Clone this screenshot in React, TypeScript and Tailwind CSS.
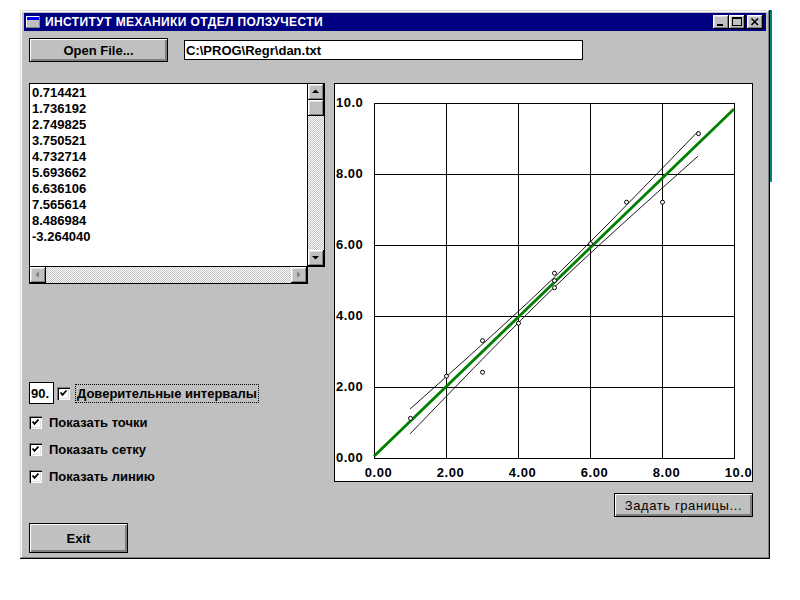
import React from "react";

const bevel =
  "shadow-[inset_-1px_-1px_0_#000,inset_1px_1px_0_#fff,inset_-2px_-2px_0_#808080,inset_2px_2px_0_#dfdfdf]";
const btnBevel =
  "shadow-[inset_1px_1px_0_#fff,inset_-1px_-1px_0_#808080,inset_-2px_-2px_0_#808080]";
const dither =
  "bg-[image:repeating-conic-gradient(#c0c0c0_0_25%,#ffffff_0_50%)] bg-[length:2px_2px]";

function Arrow({ dir, disabled }: { dir: "up" | "down" | "left" | "right"; disabled?: boolean }) {
  const c = disabled ? "#808080" : "#000";
  let pts = "";
  if (dir === "up") pts = "4,9 11,9 7.5,5.5";
  if (dir === "down") pts = "4,6 11,6 7.5,9.5";
  if (dir === "left") pts = "9,4 9,11 5.5,7.5";
  if (dir === "right") pts = "6,4 6,11 9.5,7.5";
  return (
    <div className={`w-[16px] h-[16px] shrink-0 bg-[#c0c0c0] ${bevel}`}>
      <svg width="16" height="16" viewBox="0 0 16 16">
        <polygon points={pts} fill={c} />
      </svg>
    </div>
  );
}

function Check() {
  return (
    <div className="w-[13px] h-[13px] shrink-0 bg-white shadow-[inset_1px_1px_0_#808080,inset_2px_2px_0_#000,inset_-1px_-1px_0_#fff,inset_-2px_-2px_0_#dfdfdf]">
      <svg width="13" height="13" viewBox="0 0 13 13">
        <polyline points="3.5,5.5 5.5,7.8 9.5,3.5" fill="none" stroke="#000" strokeWidth="1.8" />
      </svg>
    </div>
  );
}

function Chart() {
  const X = (x: number) => 39 + 36 * x;
  const Y = (y: number) => 374 - 35.5 * y;
  const ticks = [0, 2, 4, 6, 8, 10];
  const labels = ["0.00", "2.00", "4.00", "6.00", "8.00", "10.0"];
  const upper: string[] = [];
  const lower: string[] = [];
  for (let x = 1; x <= 9.001; x += 0.25) {
    const yc = 0.05 + 0.978 * x;
    const w = Math.sqrt(0.0196 + Math.pow(0.08 * (x - 5), 2));
    upper.push(`${X(x).toFixed(1)},${Y(yc + w).toFixed(1)}`);
    lower.push(`${X(x).toFixed(1)},${Y(yc - w).toFixed(1)}`);
  }
  const pts: [number, number][] = [
    [1, 1.13],
    [2, 2.32],
    [3, 3.32],
    [3, 2.43],
    [4, 3.81],
    [5, 5.22],
    [5, 5.01],
    [5, 4.81],
    [6, 6.05],
    [7, 7.22],
    [8, 7.22],
    [9, 9.15],
  ];
  return (
    <svg width="417" height="397" viewBox="0 0 417 397" className="block">
      <g shapeRendering="crispEdges" stroke="#000" strokeWidth="1">
        {ticks.map((t) => (
          <line key={"v" + t} x1={X(t) + 0.5} y1={Y(10)} x2={X(t) + 0.5} y2={Y(0) + 1} />
        ))}
        {ticks.map((t) => (
          <line key={"h" + t} x1={X(0)} y1={Y(t) + 0.5} x2={X(10) + 1} y2={Y(t) + 0.5} />
        ))}
      </g>
      <g fill="#000" fontFamily="'Liberation Sans', Arial, sans-serif" fontWeight="bold" fontSize="13" letterSpacing="0.5">
        {ticks.map((t, i) => (
          <text key={"yl" + t} x={1} y={Y(t) + 4}>
            {labels[i]}
          </text>
        ))}
        {ticks.map((t, i) => (
          <text key={"xl" + t} x={X(t) + 4.5} y={393} textAnchor="middle">
            {labels[i]}
          </text>
        ))}
      </g>
      <polyline points={upper.join(" ")} fill="none" stroke="#000" strokeWidth="0.9" />
      <polyline points={lower.join(" ")} fill="none" stroke="#000" strokeWidth="0.9" />
      <line x1={X(0)} y1={Y(0.05)} x2={X(10)} y2={Y(9.83)} stroke="#008000" strokeWidth="2.8" />
      {pts.map(([x, y], i) => (
        <circle key={i} cx={X(x) + 0.5} cy={Y(y) + 0.5} r="2" fill="#fff" stroke="#000" strokeWidth="1" />
      ))}
    </svg>
  );
}

export default function App() {
  const values = [
    "0.714421",
    "1.736192",
    "2.749825",
    "3.750521",
    "4.732714",
    "5.693662",
    "6.636106",
    "7.565614",
    "8.486984",
    "-3.264040",
  ];
  return (
    <div className="relative min-h-[600px] bg-white font-['Liberation_Sans',Arial,sans-serif] text-black">
      <div className="absolute left-[770px] top-[10px] w-[2px] h-[172px] bg-[#008080]" />
      <div className="pl-[20px] pt-[10px]">
        <div
          className={`w-[750px] h-[549px] bg-[#c0c0c0] pt-[3px] px-[4px] flex flex-col shadow-[inset_-1px_-1px_0_#000,inset_1px_1px_0_#dfdfdf,inset_-2px_-2px_0_#808080,inset_2px_2px_0_#fff]`}
        >
          {/* Title bar */}
          <div className="h-[18px] bg-[#000080] flex items-center pl-[2px] pr-[3px]">
            <svg width="14" height="12" viewBox="0 0 14 12" className="shrink-0">
              <rect x="0.5" y="0.5" width="13" height="11" fill="#c0c0c0" stroke="#fff" />
              <rect x="1" y="1" width="12" height="3" fill="#0000ff" />
              <rect x="1" y="4" width="12" height="7" fill="#c0c0c0" />
              <line x1="13.5" y1="0" x2="13.5" y2="12" stroke="#808080" />
              <line x1="0" y1="11.5" x2="14" y2="11.5" stroke="#808080" />
            </svg>
            <span className="ml-[5px] text-white font-bold text-[12px] leading-none tracking-[0.4px] whitespace-nowrap">
              ИНСТИТУТ МЕХАНИКИ ОТДЕЛ ПОЛЗУЧЕСТИ
            </span>
            <div className="ml-auto flex items-center">
              <div className={`w-[16px] h-[14px] bg-[#c0c0c0] ${bevel}`}>
                <svg width="16" height="14" viewBox="0 0 16 14">
                  <rect x="4" y="9" width="6" height="2" fill="#000" />
                </svg>
              </div>
              <div className={`w-[16px] h-[14px] bg-[#c0c0c0] ${bevel}`}>
                <svg width="16" height="14" viewBox="0 0 16 14">
                  <rect x="3.5" y="2.5" width="9" height="8" fill="none" stroke="#000" />
                  <rect x="3" y="2" width="10" height="2" fill="#000" />
                </svg>
              </div>
              <div className={`ml-[2px] w-[16px] h-[14px] bg-[#c0c0c0] ${bevel}`}>
                <svg width="16" height="14" viewBox="0 0 16 14">
                  <path d="M4.5 3.5 L11 10 M11 3.5 L4.5 10" stroke="#000" strokeWidth="1.6" />
                </svg>
              </div>
            </div>
          </div>

          {/* Body */}
          <div className="pl-[5px] pt-[7px] flex flex-col">
            <div className="flex items-center">
              <button
                className={`w-[139px] h-[24px] border border-black bg-[#c0c0c0] ${btnBevel} font-bold text-[13px] leading-none`}
              >
                Open File...
              </button>
              <div className="ml-[16px] w-[399px] h-[20px] bg-white border border-black flex items-center pl-[1px] font-bold text-[13px] leading-none whitespace-nowrap">
                C:\PROG\Regr\dan.txt
              </div>
            </div>

            <div className="mt-[21px] flex items-start">
              {/* Left column */}
              <div className="w-[296px] flex flex-col">
                <div className="h-[184px] border border-black flex">
                  <div className="flex-1 bg-white pl-[2px] pt-[1px] font-bold text-[13px] leading-[16px]">
                    {values.map((v) => (
                      <div key={v}>{v}</div>
                    ))}
                  </div>
                  <div className="w-[17px] border-l border-black flex flex-col">
                    <Arrow dir="up" />
                    <div className={`w-[16px] h-[16px] bg-[#c0c0c0] ${bevel}`} />
                    <div className={`flex-1 ${dither}`} />
                    <Arrow dir="down" />
                  </div>
                </div>
                <div className="w-[279px] h-[17px] border-x border-b border-black flex">
                  <Arrow dir="left" disabled />
                  <div className={`flex-1 ${dither}`} />
                  <Arrow dir="right" disabled />
                </div>

                <div className="mt-[98px] flex items-center h-[22px]">
                  <div className="w-[25px] h-[22px] bg-white border border-black flex items-center pl-[1px] font-bold text-[13px] leading-none">
                    90.
                  </div>
                  <div className="ml-[3px]">
                    <Check />
                  </div>
                  <div className="ml-[5px] h-[19px] border border-dotted border-black flex items-center px-[1px] font-bold text-[13px] leading-none whitespace-nowrap">
                    Доверительные интервалы
                  </div>
                </div>

                <div className="mt-[10px] flex flex-col gap-[11px]">
                  {["Показать точки", "Показать сетку", "Показать линию"].map((t) => (
                    <div key={t} className="h-[16px] flex items-center">
                      <Check />
                      <span className="ml-[7px] font-bold text-[13px] leading-none whitespace-nowrap">{t}</span>
                    </div>
                  ))}
                </div>

                <button
                  className={`mt-[39px] w-[99px] h-[30px] border border-black bg-[#c0c0c0] ${btnBevel} font-bold text-[13px] leading-none`}
                >
                  Exit
                </button>
              </div>

              {/* Right column */}
              <div className="ml-[9px] w-[419px] flex flex-col items-end">
                <div className="w-[419px] h-[399px] bg-white border border-black">
                  <Chart />
                </div>
                <button
                  className={`mt-[11px] w-[139px] h-[24px] border border-black bg-[#c0c0c0] ${btnBevel} text-[13px] tracking-[0.6px] leading-none`}
                >
                  Задать границы...
                </button>
              </div>
            </div>
          </div>
        </div>
      </div>
    </div>
  );
}
